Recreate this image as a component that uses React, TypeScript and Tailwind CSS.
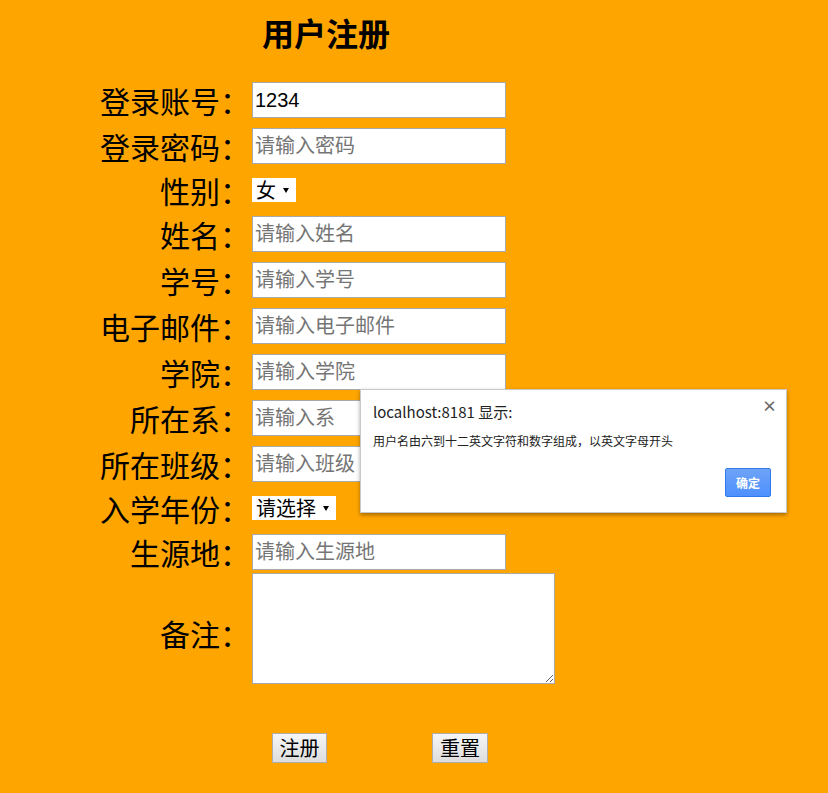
import { useState } from "react";

const cjk = "font-['Noto_Sans_CJK_SC',sans-serif]";
const latin = "font-['Liberation_Sans','Noto_Sans_CJK_SC',sans-serif]";

type Row = {
  label: string;
  kind: "input" | "select" | "textarea";
  placeholder?: string;
  value?: string;
  options?: string[];
  width?: string;
  top: string;
};

// rows of the register table
const rows: Row[] = [
  { label: "登录账号：", kind: "input", value: "1234", top: "mt-0" },
  { label: "登录密码：", kind: "input", placeholder: "请输入密码", top: "mt-[10px]" },
  { label: "性别：", kind: "select", options: ["女", "男"], width: "w-[44px]", top: "mt-[10px]" },
  { label: "姓名：", kind: "input", placeholder: "请输入姓名", top: "mt-[10px]" },
  { label: "学号：", kind: "input", placeholder: "请输入学号", top: "mt-[10px]" },
  { label: "电子邮件：", kind: "input", placeholder: "请输入电子邮件", top: "mt-[10px]" },
  { label: "学院：", kind: "input", placeholder: "请输入学院", top: "mt-[10px]" },
  { label: "所在系：", kind: "input", placeholder: "请输入系", top: "mt-[10px]" },
  { label: "所在班级：", kind: "input", placeholder: "请输入班级", top: "mt-[10px]" },
  {
    label: "入学年份：",
    kind: "select",
    options: ["请选择", "2016", "2017", "2018"],
    width: "w-[84px]",
    top: "mt-[10px]",
  },
  { label: "生源地：", kind: "input", placeholder: "请输入生源地", top: "mt-[10px]" },
  { label: "备注：", kind: "textarea", top: "mt-[3px]" },
];

const Arrow = () => (
  <svg width="6" height="5" viewBox="0 0 6 5" className="shrink-0">
    <path d="M0 0h6L3 5z" fill="#000" />
  </svg>
);

const Field = ({ row }: { row: Row }) => {
  if (row.kind === "input") {
    return (
      <input
        defaultValue={row.value}
        placeholder={row.placeholder}
        className={`${latin} block h-[36px] w-[254px] border border-[#a9a9a9] bg-white px-[2px] text-[20px] text-black outline-none placeholder:text-[#757575]`}
      />
    );
  }
  if (row.kind === "select") {
    return (
      <div className={`${row.width} flex h-[24px] items-center justify-between bg-white pl-[4px] pr-[7px]`}>
        <select
          className={`${cjk} appearance-none bg-transparent text-[20px] leading-none text-black outline-none`}
        >
          {row.options!.map((o) => (
            <option key={o}>{o}</option>
          ))}
        </select>
        <Arrow />
      </div>
    );
  }
  return (
    <textarea className="block h-[111px] w-[303px] border border-[#a9a9a9] bg-white outline-none" />
  );
};

const App = () => {
  const [open, setOpen] = useState(true);

  return (
    <div className={`${cjk} relative min-h-[793px] w-full bg-[#ffa500] text-black`}>
      {/* Title */}
      <h1 className="pl-[262px] pt-[16px] text-[32px] font-bold leading-none">用户注册</h1>

      {/* Form table */}
      <div className="mt-[34px] flex flex-col">
        {rows.map((row) => (
          <div
            key={row.label}
            className={`${row.top} flex items-center ${
              row.kind === "input" ? "h-[36px]" : row.kind === "select" ? "h-[32px]" : "h-[111px]"
            }`}
          >
            <label
              className={`w-[250px] shrink-0 text-right text-[30px] leading-none ${
                row.kind === "textarea" ? "pt-[8px]" : ""
              }`}
            >
              {row.label}
            </label>
            <div className="ml-[2px]">
              <Field row={row} />
            </div>
          </div>
        ))}
      </div>

      {/* Buttons */}
      <div className="mt-[49px] flex gap-[105px] pl-[272px]">
        <button className="flex h-[30px] w-[55px] items-center justify-center border border-[#adadad] bg-gradient-to-b from-[#f6f6f6] to-[#dddddd] text-[20px] leading-none">
          注册
        </button>
        <button className="flex h-[30px] w-[56px] items-center justify-center border border-[#adadad] bg-gradient-to-b from-[#f6f6f6] to-[#dddddd] text-[20px] leading-none">
          重置
        </button>
      </div>

      {/* Alert dialog */}
      {open && (
        <div className="absolute left-[360px] top-[389px] flex h-[124px] w-[427px] flex-col border border-[#c8c8c8] bg-white shadow-[0_2px_4px_rgba(0,0,0,0.35)]">
          <div className="flex items-start justify-between pl-[12px] pr-[9px] pt-[12px]">
            <span className="text-[15px] leading-[20px] text-[#222]">localhost:8181 显示:</span>
            <button
              onClick={() => setOpen(false)}
              className="mt-[-4px] text-[15px] font-bold leading-none text-[#666]"
            >
              ×
            </button>
          </div>
          <p className="mt-[11px] pl-[12px] text-[12px] leading-[16px] text-[#222]">
            用户名由六到十二英文字符和数字组成，以英文字母开头
          </p>
          <div className="mt-auto flex justify-end pb-[15px] pr-[15px]">
            <button
              onClick={() => setOpen(false)}
              className="flex h-[29px] w-[46px] items-center justify-center rounded-[2px] border border-[#3079ed] bg-gradient-to-b from-[#6fa3f7] to-[#4d90fe] text-[12px] font-bold leading-none text-white"
            >
              确定
            </button>
          </div>
        </div>
      )}
    </div>
  );
};

export default App;
